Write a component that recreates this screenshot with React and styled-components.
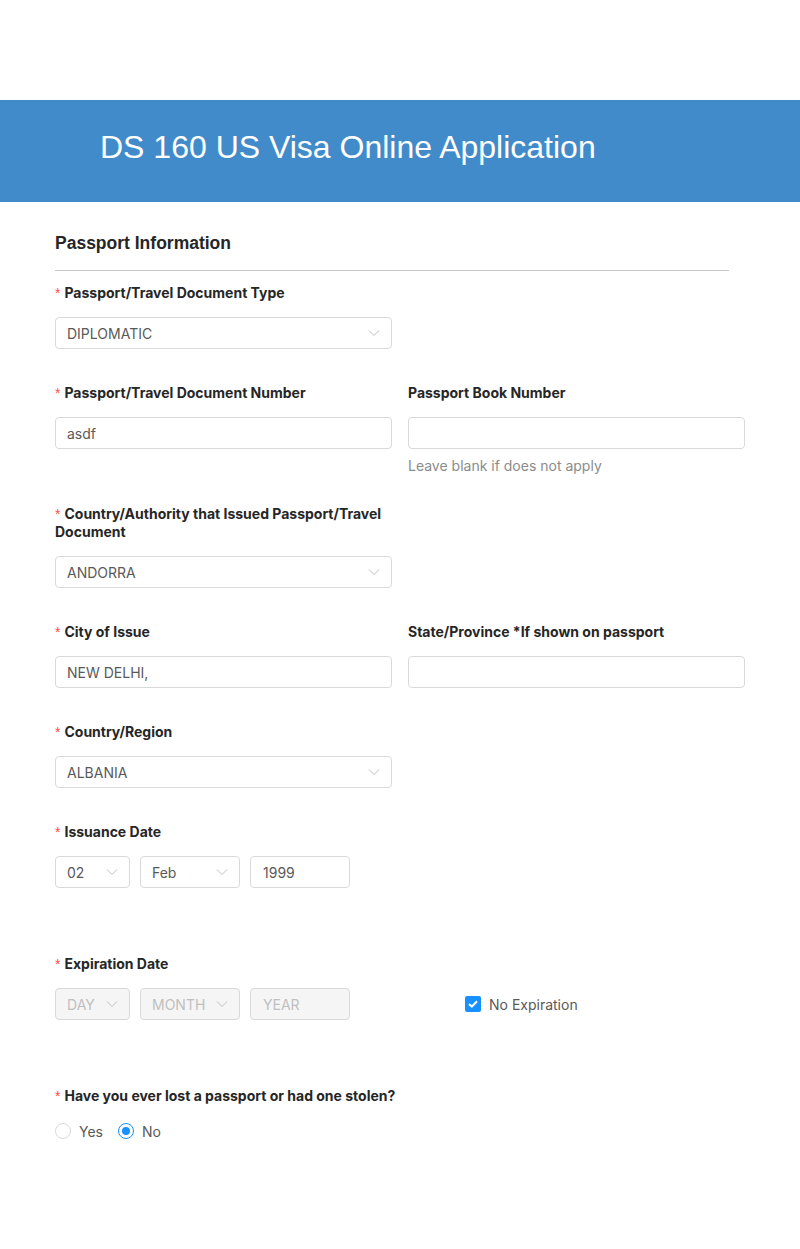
import React from "react";
import styled, { createGlobalStyle } from "styled-components";

const GlobalStyle = createGlobalStyle`
  body {
    margin: 0;
    background: #fff;
    font-family: Inter, "Noto Sans", sans-serif;
    color: #262626;
  }
`;

const Header = styled.header`
  margin-top: 100px;
  height: 102px;
  box-sizing: border-box;
  background: #428bca;
  display: flex;
  align-items: center;
  padding: 0 0 7px 100px;

  h1 {
    margin: 0;
    font-family: "Liberation Sans", Arial, sans-serif;
    font-weight: 400;
    font-size: 32px;
    color: #fff;
  }
`;

const Main = styled.main`
  padding: 29px 55px 80px;
`;

const SectionTitle = styled.h2`
  margin: 0;
  font-family: "Liberation Sans", Arial, sans-serif;
  font-size: 17.5px;
  line-height: 24px;
  font-weight: 700;
  color: #262626;
`;

const Divider = styled.hr`
  width: 674px;
  margin: 15px 0 10px;
  border: none;
  border-top: 1px solid #c8c8c8;
`;

const Row = styled.div`
  display: grid;
  grid-template-columns: 337px 337px;
  column-gap: 16px;
  align-items: start;
`;

const FormItem = styled.div`
  margin-bottom: ${(p) => p.$space || 32}px;
`;

const Label = styled.div`
  padding: 3px 0 1px;
  margin-bottom: 14px;
  font-size: 14px;
  line-height: 18px;
  font-weight: 700;
  color: #262626;
`;

const Star = styled.span`
  color: #ff4d4f;
  font-weight: 400;
  margin-right: 4px;
  font-family: "Liberation Sans", sans-serif;
`;

const Box = styled.div`
  box-sizing: border-box;
  width: ${(p) => (p.$width ? `${p.$width}px` : "100%")};
  height: 32px;
  border: 1px solid #d9d9d9;
  border-radius: 4px;
  background: ${(p) => (p.$disabled ? "#f5f5f5" : "#fff")};
  color: ${(p) => (p.$disabled ? "#bfbfbf" : "#595959")};
  display: flex;
  align-items: center;
  justify-content: space-between;
  padding: 0 11px 0 ${(p) => p.$pl || 11}px;
  font-size: 14px;
`;

const Helper = styled.div`
  margin-top: 7px;
  font-size: 14px;
  line-height: 20px;
  color: #8c8c8c;
`;

const DateGroup = styled.div`
  display: flex;
  gap: 10px;
`;

const ExpirationRow = styled.div`
  display: flex;
  align-items: center;
`;

const CheckLabel = styled.label`
  margin-left: 115px;
  display: flex;
  align-items: center;
  gap: 8px;
  font-size: 14px;
  color: #595959;
`;

const CheckBox = styled.span`
  width: 16px;
  height: 16px;
  border-radius: 2px;
  background: #1890ff;
  display: flex;
  align-items: center;
  justify-content: center;
`;

const RadioGroup = styled.div`
  display: flex;
  align-items: center;
  gap: 15px;
  height: 22px;
`;

const RadioOption = styled.label`
  display: flex;
  align-items: center;
  gap: 8px;
  font-size: 14px;
  color: #595959;
`;

const RadioCircle = styled.span`
  box-sizing: border-box;
  width: 16px;
  height: 16px;
  border-radius: 50%;
  border: 1px solid ${(p) => (p.$checked ? "#1890ff" : "#d9d9d9")};
  display: flex;
  align-items: center;
  justify-content: center;

  &::after {
    content: "";
    display: ${(p) => (p.$checked ? "block" : "none")};
    width: 8px;
    height: 8px;
    border-radius: 50%;
    background: #1890ff;
  }
`;

const Chevron = () => (
  <svg width="12" height="8" viewBox="0 0 12 8" fill="none">
    <path d="M1 1.5 L6 6.5 L11 1.5" stroke="#bfbfbf" strokeWidth="1" />
  </svg>
);

const Required = ({ children }) => (
  <Label>
    <Star>*</Star>
    {children}
  </Label>
);

const Select = ({ value, width, disabled }) => (
  <Box $width={width} $disabled={disabled}>
    {value}
    <Chevron />
  </Box>
);

export default function App() {
  return (
    <>
      <GlobalStyle />
      <Header>
        <h1>DS 160 US Visa Online Application</h1>
      </Header>
      <Main>
        <SectionTitle>Passport Information</SectionTitle>
        <Divider />

        <Row>
          <FormItem>
            <Required>Passport/Travel Document Type</Required>
            <Select value="DIPLOMATIC" />
          </FormItem>
        </Row>

        <Row>
          <FormItem>
            <Required>Passport/Travel Document Number</Required>
            <Box>asdf</Box>
          </FormItem>
          <FormItem $space={26}>
            <Label>Passport Book Number</Label>
            <Box />
            <Helper>Leave blank if does not apply</Helper>
          </FormItem>
        </Row>

        <Row>
          <FormItem>
            <Required>Country/Authority that Issued Passport/Travel Document</Required>
            <Select value="ANDORRA" />
          </FormItem>
        </Row>

        <Row>
          <FormItem>
            <Required>City of Issue</Required>
            <Box>NEW DELHI,</Box>
          </FormItem>
          <FormItem>
            <Label>State/Province *If shown on passport</Label>
            <Box />
          </FormItem>
        </Row>

        <Row>
          <FormItem>
            <Required>Country/Region</Required>
            <Select value="ALBANIA" />
          </FormItem>
        </Row>

        <FormItem $space={64}>
          <Required>Issuance Date</Required>
          <DateGroup>
            <Select value="02" width={75} />
            <Select value="Feb" width={100} />
            <Box $width={100} $pl={12}>1999</Box>
          </DateGroup>
        </FormItem>

        <FormItem $space={64}>
          <Required>Expiration Date</Required>
          <ExpirationRow>
            <DateGroup>
              <Select value="DAY" width={75} disabled />
              <Select value="MONTH" width={100} disabled />
              <Box $width={100} $pl={12} $disabled>YEAR</Box>
            </DateGroup>
            <CheckLabel>
              <CheckBox>
                <svg width="10" height="8" viewBox="0 0 10 8" fill="none">
                  <path d="M1 4 L3.8 6.6 L9 1.2" stroke="#fff" strokeWidth="2" />
                </svg>
              </CheckBox>
              No Expiration
            </CheckLabel>
          </ExpirationRow>
        </FormItem>

        <FormItem>
          <Required>Have you ever lost a passport or had one stolen?</Required>
          <RadioGroup>
            <RadioOption>
              <RadioCircle />
              Yes
            </RadioOption>
            <RadioOption>
              <RadioCircle $checked />
              No
            </RadioOption>
          </RadioGroup>
        </FormItem>
      </Main>
    </>
  );
}
